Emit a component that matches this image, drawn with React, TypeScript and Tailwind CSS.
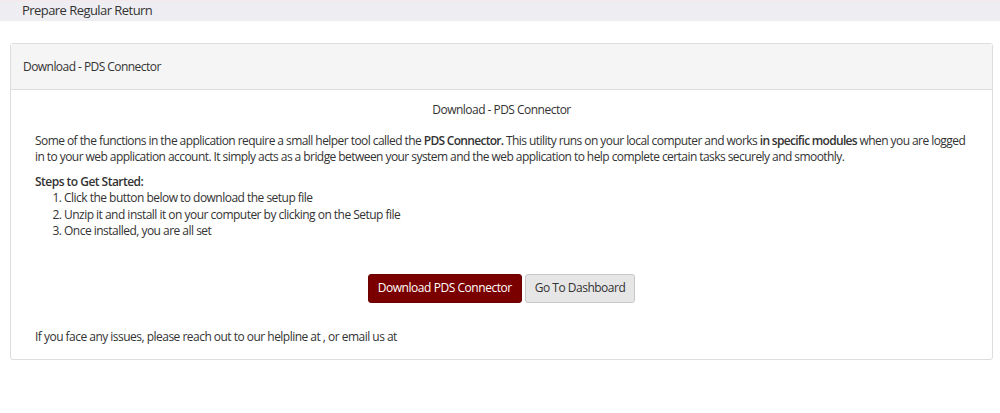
import React from "react";

const App: React.FC = () => {
  return (
    <div className="min-h-[413px] bg-white text-[#333] font-['Open_Sans','Noto_Sans',sans-serif]">
      <div className="h-[21px] bg-[#eeeef2] border-t border-[#f6e8ea] pl-[22px] text-[13px] leading-[19px] tracking-[-0.55px] text-[#333]">
        Prepare Regular Return
      </div>

      <div className="mt-[22px] mx-[10px] mr-[7px] border border-[#dddddd] rounded-[3px]">
        <div className="h-[46px] bg-[#f5f5f5] border-b border-[#dddddd] px-[12px] flex items-center text-[12px] tracking-[-0.55px]">
          Download - PDS Connector
        </div>
        <div className="px-[24px] pt-[12px] pb-[14px] text-[12px] leading-[16.5px] tracking-[-0.52px]">
          <div className="text-center mb-[14px]">Download - PDS Connector</div>
          <p className="tracking-[-0.56px]">
            Some of the functions in the application require a small helper tool called the{" "}
            <b className="font-semibold tracking-[-0.7px]">PDS Connector.</b> This utility runs on your local computer and works{" "}
            <b className="font-semibold tracking-[-0.7px]">in specific modules</b> when you are logged in to your web application account. It simply acts as a
            bridge between your system and the web application to help complete certain tasks securely and smoothly.
          </p>
          <div className="mt-[8px] font-semibold">Steps to Get Started:</div>
          <ol className="list-decimal pl-[29px]">
            <li>Click the button below to download the setup file</li>
            <li>Unzip it and install it on your computer by clicking on the Setup file</li>
            <li>Once installed, you are all set</li>
          </ol>
          <div className="mt-[34px] flex justify-center gap-[3px]">
            <button className="h-[29px] px-[9px] bg-[#7a0000] text-white rounded-[3px] border border-[#6a0000] text-[12px] tracking-[-0.45px]">
              Download PDS Connector
            </button>
            <button className="h-[29px] px-[9px] bg-[#e6e6e6] text-[#333] rounded-[3px] border border-[#c8c8c8] text-[12px] tracking-[-0.5px]">
              Go To Dashboard
            </button>
          </div>
          <div className="mt-[26px]">If you face any issues, please reach out to our helpline at , or email us at</div>
        </div>
      </div>
    </div>
  );
};

export default App;
